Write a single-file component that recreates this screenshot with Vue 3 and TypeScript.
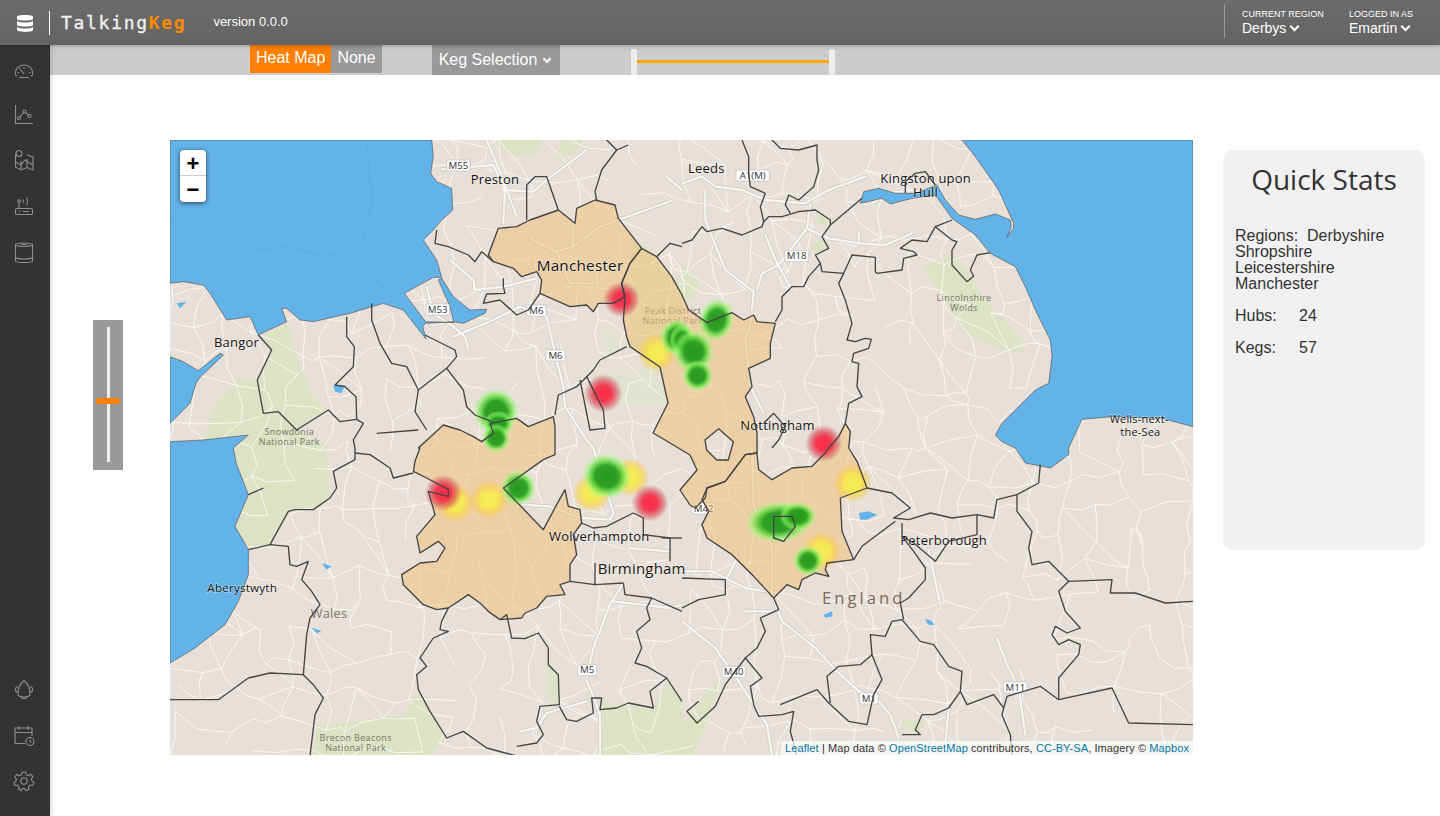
<script setup lang="ts">
type Blob = { x: number; y: number; rx: number; ry: number; c: 'g' | 'y' | 'r'; rot?: number }

// map is drawn on a 3x grid, four quadrants of 1536x924
const shift = (dx: number, dy: number, s: string) =>
  s
    .split(' ')
    .map((p) => {
      const [x, y] = p.split(',').map(Number)
      return `${x + dx},${y + dy}`
    })
    .join(' ')
const q1 = (s: string) => s
const q2 = (s: string) => shift(1536, 0, s)
const q3 = (s: string) => shift(0, 924, s)
const q4 = (s: string) => shift(1536, 924, s)
const toPath = (s: string) => 'M' + s.split(' ').join(' L')
const many = (fn: (s: string) => string, list: string[]) => list.map((s) => toPath(fn(s)))

const seaPaths = [
  // irish sea + north wales coast
  toPath(q1('0,0 785,0 790,50 782,100 800,125 845,145 848,210 815,240 790,270 760,300 800,360 815,412 790,412 703,460 770,550 850,545 880,550 945,520 950,508 900,510 850,470 815,415 805,420 840,500 852,548 770,545 758,560 768,597 700,510 640,490 540,520 430,545 390,540 350,505 335,505 350,545 265,585 240,530 170,540 120,460 100,435 40,425 0,430')) + ' Z',
  toPath(q1('0,650 40,665 85,692 150,640 160,645 90,712 78,730 60,790 0,850')) + ' Z',
  toPath(q1('0,905 100,900 235,885 190,924') + ' ' + q3('200,50 235,140 195,235 235,305 235,380 205,460 165,530 75,600 0,645')) + ' Z',
  // north sea, humber and the wash
  toPath(q2('840,0 880,50 950,150 995,250 995,265 975,290 988,262 985,240 940,222 880,238 830,225 790,180 765,135 700,160 640,160 590,145 545,155 535,190 600,175 625,192 690,175 760,165 810,235 880,285 925,340 1000,380 1030,440 1060,510 1105,600 1110,650 1100,730 1060,750 960,850 940,885 960,905 1000,924') + ' ' + q4('1030,45 1105,60 1160,20 1160,0 1200,-86 1290,-94 1440,-89 1533,-64') + ' 3069,0') + ' Z',
]

// faint offshore limits in the irish sea
const seaLines = many(q1, [
  '0,235 100,235 200,285 265,330 350,320 470,350 575,310 610,175 600,130 590,0',
  '525,340 620,420 700,510',
])

const lakes = [
  ...many(q4, ['530,195 560,190 585,200 555,215 535,215', '730,512 750,520 758,532 738,530', '425,500 450,490 452,505 430,510']),
  ...many(q1, ['20,490 50,485 30,505', '490,735 525,735 515,760 495,755']),
  ...many(q3, ['455,345 485,355 470,365', '425,540 455,548 440,556']),
]

const parks = [
  q2('725,380 810,340 870,410 900,470 1020,600 1025,640 960,630 870,590 820,540 780,470'),
  q1('270,590 355,550 380,650 430,770 470,810 380,870 325,815 280,820 262,720 305,630'),
  q1('130,800 200,720 262,720 280,820 325,815 380,870 480,924 190,924 100,900'),
  q3('190,0 470,0 480,150 430,185 355,190 300,290 235,300 200,235 235,140'),
  q3('440,830 560,820 700,800 740,730 790,800 830,870 780,924 430,924'),
  q1('975,0 1110,0 1105,40 1040,50 990,30'),
  q1('1150,60 1180,0 1240,0 1215,40'),
  q1('1380,290 1445,330 1536,440 1536,620 1470,680 1380,620'),
  q2('0,370 50,420 40,480 0,470'),
  q2('400,220 440,240 430,260 410,250'),
  q2('385,310 430,300 425,335 395,340'),
  q3('1290,760 1450,780 1490,700 1536,750 1536,924 1290,924'),
  q3('1130,620 1165,680 1165,770 1130,750'),
  q4('0,830 80,720 120,690 80,810 30,924 0,924'),
  q4('650,820 740,820 700,860'),
]

const paleParks = [q1('1300,560 1370,610 1290,660 1240,700 1470,680 1495,790 1340,790 1250,700 1310,620')]

const motorways = [
  ...many(q1, [
    '815,88 970,75 1005,150 1000,250',
    '1000,150 1090,155 1130,120 1250,30',
    '950,0 1000,120 1040,230',
    '1080,295 1160,335 1210,320 1290,260 1345,240 1510,180',
    '1160,335 1200,430 1285,430 1280,400',
    '1210,320 1210,240',
    '840,360 910,420 915,450 1000,440 1100,415',
    '770,440 790,520 850,560 885,590 895,625',
    '850,590 970,540 1050,500 1130,530 1155,640 1180,740 1185,800 1250,900 1270,924',
    '1490,110 1536,150',
  ]),
  ...many(q2, [
    '0,130 60,110 100,140 180,150 250,180 370,190 440,150 550,110',
    '70,150 70,240 130,390 215,455 210,510',
    '250,285 285,370 330,450',
    '225,450 240,400 290,375 375,265 385,195',
    '375,265 440,295 530,310 610,315 690,280',
    '530,275 530,305',
    '190,600 210,530',
    '190,600 205,740 245,820',
  ]),
  ...many(q3, [
    '1055,170 1140,175 1230,210 1320,215 1330,195 1270,0',
    '1250,700 1270,745 1290,800 1290,924',
    '1360,405 1320,470 1270,600 1250,690',
    '1330,460 1500,480 1536,470',
    '1050,850 1100,840 1130,795 1250,760',
    '1375,300 1500,310',
  ]),
  ...many(q4, [
    '210,0 215,170 270,300 270,440 300,520 400,600 465,670 530,730 590,760 625,800 650,870',
    '0,370 90,370 190,420 250,430',
    '165,330 130,400',
    '740,305 775,470',
    '945,570 975,650 1010,720 1030,860',
    '190,490 270,490',
    '0,520 100,600 170,700 215,770 255,830 270,924',
    '800,780 790,890',
  ]),
]

// thin country roads: a jittered grid of villages joined up with a seeded random
let seed = 7
const rnd = () => {
  seed = (seed * 16807) % 2147483647
  return seed / 2147483647
}
const minorRoads = (() => {
  const step = 92
  const cols = 35
  const rows = 21
  const pts: [number, number][][] = []
  for (let r = 0; r < rows; r++) {
    pts.push([])
    for (let c = 0; c < cols; c++) {
      pts[r].push([c * step + (rnd() - 0.5) * 70, r * step + (rnd() - 0.5) * 70])
    }
  }
  let d = ''
  const edge = (a: [number, number], b: [number, number]) => {
    const mx = (a[0] + b[0]) / 2 + (rnd() - 0.5) * 34
    const my = (a[1] + b[1]) / 2 + (rnd() - 0.5) * 34
    d += `M${a[0].toFixed(0)},${a[1].toFixed(0)} L${mx.toFixed(0)},${my.toFixed(0)} L${b[0].toFixed(0)},${b[1].toFixed(0)} `
  }
  for (let r = 0; r < rows; r++) {
    for (let c = 0; c < cols; c++) {
      if (c < cols - 1 && rnd() > 0.35) edge(pts[r][c], pts[r][c + 1])
      if (r < rows - 1 && rnd() > 0.35) edge(pts[r][c], pts[r + 1][c])
      if (c < cols - 1 && r < rows - 1 && rnd() > 0.82) edge(pts[r][c], pts[r + 1][c + 1])
    }
  }
  return d
})()

const regions = [
  // manchester
  toPath(q1('955,345 985,265 1040,260 1080,240 1165,210 1215,250 1220,205 1275,180 1335,195 1345,235 1415,325 1380,370 1355,430 1365,470 1330,490 1285,490 1270,515 1250,495 1200,500 1110,460 1115,420 1100,395 1055,410 1030,385 970,365')) + ' Z',
  // derbyshire
  toPath('1415,325 1460,350 1505,410 1536,465 1556,510 1611,548 1686,518 1721,540 1751,525 1761,545 1816,550 1801,610 1801,655 1736,685 1746,740 1726,770 1751,830 1761,880 1761,939 1726,944 1666,1024 1611,1044 1606,1074 1576,1104 1560,1095 1530,1050 1581,990 1560,945 1485,900 1449,879 1494,789 1470,681 1380,620 1370,590 1360,540 1365,480 1355,430 1380,370') +
    ' Z ' + toPath('1605,900 1646,866 1690,905 1675,960 1640,960 1610,930') + ' Z',
  // leicestershire
  toPath('2026,850 2041,875 2036,924 2061,964 2091,1044 2011,1074 2016,1174 2051,1259 1971,1269 1966,1289 1976,1309 1936,1299 1896,1319 1886,1349 1851,1334 1811,1374 1751,1309 1686,1244 1611,1194 1596,1154 1616,1114 1596,1079 1611,1044 1666,1024 1726,944 1761,939 1766,989 1806,1019 1866,984 1926,979 1966,939 1976,924 2006,890') +
    ' Z ' + toPath('1811,1129 1866,1129 1876,1159 1841,1204 1811,1194') + ' Z',
  // shropshire
  toPath(q1('745,924 820,855 870,870 910,890 935,905 970,880 960,850 1040,835 1075,860 1150,830 1155,860') + ' ' +
    q3('1155,20 1120,35 1000,120 1120,245 1160,170 1185,125 1195,175 1230,185 1235,225 1210,260 1220,320 1200,350 1200,400 1170,410 1185,440 1130,445 1100,480 1065,495 1055,510 990,515 955,490 930,465 895,440 835,480 800,485 760,470 700,410 695,380 750,345 800,340 825,300 805,280 750,315 740,265 795,200 775,130 835,145 835,125 770,90 730,70 735,40 750,0')) + ' Z',
]

const borders = [
  ...many(q1, [
    '1375,15 1340,30 1295,90 1275,155 1280,180',
    '1340,30 1310,0',
    '1070,240 1070,135 1095,110 1130,110 1165,210',
    '800,270 795,310 835,320 895,345 915,365 935,335 970,365',
    '1000,415 1000,440 1005,460 950,462 940,490 990,480 1040,525 1075,510 1110,460',
    '605,490 605,540 630,610 665,670 710,680 745,750 830,685 860,650 855,630 765,585',
    '530,530 530,590 553,620 550,680 495,735 525,740 558,770 560,838 510,845 475,810 380,870 325,815 280,820 262,720 305,630 265,585',
    '745,750 735,815 770,870',
    '830,685 880,750 890,800 915,825 965,845',
    '1370,620 1290,660 1270,690 1250,710 1220,740 1165,765 1155,825',
    '1250,710 1300,810 1305,865 1260,870 1230,720',
    '1460,350 1500,310 1536,320',
    '560,838 580,850 550,900 555,924',
    '620,880 745,870',
  ]),
  ...many(q2, [
    '180,0 200,50 200,100 205,140 250,160 235,200 245,245 240,260 180,285 120,265 75,275 60,260 30,300 0,310',
    '270,0 295,25 350,30 405,15 405,60 410,90 395,140 350,180 320,165 310,195 325,220',
    '245,245 260,230 300,230 350,215 400,210 445,240 445,255 540,175',
    '445,255 420,290 440,325 400,345 415,370 380,410 365,440 330,440 300,470 300,510 280,545',
    '415,370 420,395 485,400 510,345 580,352 580,395 585,400 660,390 665,355 705,345 695,335 655,325 690,300 735,305 760,260 810,300 825,305 810,330 810,375 855,425 875,408 865,390 885,345 925,338',
    '760,260 810,240',
    '485,400 470,430 490,480 510,550 495,600 520,605 550,595 568,598 560,625 515,640 510,665 530,670 525,740 540,770 500,790 490,850',
    '670,160 670,125 700,100 730,95 760,135',
    '245,850 275,820 310,860 290,900 270,924',
  ]),
  ...many(q3, [
    '235,140 280,120',
    '300,290 355,190 375,185 430,185 480,150 500,120 490,70 555,35 555,0',
    '555,15 600,20 660,60 670,90 730,75',
    '235,305 300,290 355,295 360,350 380,355 415,340 395,395 425,430 450,470 420,510 410,560 400,680 300,675 235,690 145,755 0,755',
    '400,680 430,710 460,750 435,800 420,924',
    '835,480 815,520 810,545 835,550 790,570 750,630 770,655 740,680 745,725 780,790 830,870 880,850 950,900 1040,924',
    '990,515 1010,500 1025,570 1065,572 1105,555 1135,600 1135,650 1165,680 1168,770 1110,775 1100,820 1120,860 1100,885 1040,895',
    '1168,775 1190,815 1220,820 1270,795 1265,750 1295,750 1290,785 1340,780 1375,765 1450,780 1440,730 1490,690 1536,760',
    '1490,690 1430,655 1395,645 1415,600 1400,550 1440,515 1430,480 1445,450 1365,440 1360,405',
    '1200,400 1275,410 1275,345',
    '1275,410 1360,405',
    '1235,225 1270,240 1310,235 1390,195 1420,210 1420,260 1500,270 1500,340',
    '1475,270 1536,270',
    '1445,450 1536,490',
  ]),
  ...many(q4, [
    '0,390 130,395 130,440 50,455 0,480',
    '275,450 290,485 235,510 250,550 225,600 190,630 240,690 205,715 215,770 230,805 300,800 335,790 325,850 345,924',
    '190,630 130,710 100,775 45,825 15,790 50,760',
    '295,770 405,725 440,765 500,820 555,830 575,740 600,695 570,620 535,650 470,655 435,685 445,765',
    '570,620 565,560 610,565 630,520 660,515 715,580 755,590 800,655 840,670 835,730 800,780 755,800 720,800 700,845 715,860 660,860',
    '835,730 855,770 935,740 965,780 960,800 985,860 990,924',
    '965,780 975,745 1075,715 1130,755 1290,720 1340,825 1533,830',
    '1130,755 1130,690 1190,620 1195,590 1160,575 1130,590 1110,560 1120,535 1155,555 1195,540 1150,490 1130,430 1160,400 1290,395 1285,435 1360,435 1450,465 1533,460',
    '1160,400 1100,340 1050,350 1040,300 1050,250 1005,190 1005,140 1070,105 1075,50',
    '1005,140 945,155 935,210 885,200 810,210 745,195 680,215 635,210 685,180 630,135 555,120',
    '640,220 540,295 515,335',
    '660,225 660,265 695,310 730,360 730,395 680,450 655,465 665,515',
    '885,200 885,260 800,280 760,340 695,285 660,265',
  ]),
]

const heat: Blob[] = [
  { x: 1355, y: 478, rx: 56, ry: 54, c: 'r' },
  { x: 1300, y: 760, rx: 58, ry: 58, c: 'r' },
  { x: 1460, y: 638, rx: 58, ry: 58, c: 'y' },
  { x: 1520, y: 592, rx: 52, ry: 56, c: 'g' },
  { x: 978, y: 815, rx: 70, ry: 70, c: 'g' },
  { x: 985, y: 852, rx: 46, ry: 40, c: 'g' },
  { x: 978, y: 895, rx: 44, ry: 44, c: 'g' },
  { x: 855, y: 1089, rx: 58, ry: 58, c: 'y' },
  { x: 820, y: 1059, rx: 56, ry: 56, c: 'r' },
  { x: 958, y: 1079, rx: 58, ry: 58, c: 'y' },
  { x: 1045, y: 1044, rx: 54, ry: 54, c: 'g' },
  { x: 1380, y: 1012, rx: 58, ry: 58, c: 'y' },
  { x: 1265, y: 1059, rx: 58, ry: 58, c: 'y' },
  { x: 1310, y: 1009, rx: 76, ry: 70, c: 'g', rot: 15 },
  { x: 1440, y: 1089, rx: 56, ry: 56, c: 'r' },
  { x: 1639, y: 540, rx: 54, ry: 66, c: 'g', rot: 15 },
  { x: 1536, y: 600, rx: 38, ry: 46, c: 'g' },
  { x: 1571, y: 635, rx: 62, ry: 66, c: 'g' },
  { x: 1583, y: 707, rx: 48, ry: 48, c: 'g' },
  { x: 1961, y: 910, rx: 56, ry: 56, c: 'r' },
  { x: 2048, y: 1029, rx: 58, ry: 58, c: 'y' },
  { x: 1825, y: 1146, rx: 100, ry: 64, c: 'g', rot: -4 },
  { x: 1884, y: 1129, rx: 56, ry: 44, c: 'g' },
  { x: 1954, y: 1234, rx: 58, ry: 58, c: 'y' },
  { x: 1914, y: 1262, rx: 46, ry: 46, c: 'g' },
]

const labels = [
  { t: 'Preston', x: 902, y: 132, s: 39 },
  { t: 'Manchester', x: 1100, y: 393, s: 46 },
  { t: 'Bangor', x: 132, y: 620, s: 39 },
  { t: 'Leeds', x: 1554, y: 98, s: 39 },
  { t: 'Kingston upon', x: 2131, y: 128, s: 39 },
  { t: 'Hull', x: 2229, y: 170, s: 39 },
  { t: 'Nottingham', x: 1711, y: 870, s: 39 },
  { t: 'Wells-next-', x: 2819, y: 848, s: 33 },
  { t: 'the-Sea', x: 2851, y: 887, s: 33 },
  { t: 'Aberystwyth', x: 112, y: 1356, s: 35 },
  { t: 'Wolverhampton', x: 1137, y: 1204, s: 39 },
  { t: 'Birmingham', x: 1283, y: 1302, s: 45 },
  { t: 'Peterborough', x: 2191, y: 1214, s: 39 },
]

const parkLabels = [
  { t: 'Peak District', x: 1509, y: 522 },
  { t: 'National Park', x: 1509, y: 551 },
  { t: 'Snowdonia', x: 358, y: 886 },
  { t: 'National Park', x: 358, y: 915 },
  { t: 'Lincolnshire', x: 2382, y: 483 },
  { t: 'Wolds', x: 2382, y: 512 },
  { t: 'Brecon Beacons', x: 557, y: 1803 },
  { t: 'National Park', x: 557, y: 1832 },
]

const shields = [
  { t: 'M55', x: 830, y: 60, w: 70 },
  { t: 'M53', x: 768, y: 492, w: 70 },
  { t: 'M6', x: 1070, y: 495, w: 58 },
  { t: 'M6', x: 1128, y: 630, w: 57 },
  { t: 'A1(M)', x: 1698, y: 90, w: 100 },
  { t: 'M18', x: 1844, y: 332, w: 72 },
  { t: 'M5', x: 1223, y: 1574, w: 57 },
  { t: 'M42', x: 1566, y: 1089, w: 70 },
  { t: 'M40', x: 1656, y: 1579, w: 70 },
  { t: 'M1', x: 2069, y: 1659, w: 55 },
  { t: 'M11', x: 2501, y: 1626, w: 70 },
]
</script>

<template>
  <div class="app">
    <header class="topbar">
      <svg class="logo-icon" width="18" height="20" viewBox="0 0 18 20">
        <path d="M1 3.5C1 1.5 17 1.5 17 3.5V6C17 8 1 8 1 6Z" fill="#fff" />
        <path d="M1 8C4 10 14 10 17 8V12C17 14 1 14 1 12Z" fill="#fff" />
        <path d="M1 14C4 16 14 16 17 14V17C17 19.5 1 19.5 1 17Z" fill="#fff" />
      </svg>
      <span class="logo-divider"></span>
      <span class="logo-text">Talking<b>Keg</b></span>
      <span class="version">version 0.0.0</span>
      <div class="top-right">
        <div class="top-menu first">
          <small>CURRENT REGION</small>
          <span>Derbys <i class="chev"></i></span>
        </div>
        <div class="top-menu">
          <small>LOGGED IN AS</small>
          <span>Emartin <i class="chev"></i></span>
        </div>
      </div>
    </header>

    <div class="body">
      <nav class="sidebar">
        <div class="nav-group">
          <a class="nav-item">
            <svg width="24" height="24" viewBox="0 0 24 24">
              <path d="M4.500 20.500C3.500 19 3 17 3.500 15.500C4.500 11.500 8 9 12 9C16 9 19.500 11.500 20.500 15.500C21 17 20.500 19 19.500 20.500" />
              <path d="M7 21.500H17M12 18L8.500 13.500M5.500 16.500H7M18.500 16.500H17M12 11V12.500M7.500 12L8.500 13" />
            </svg>
          </a>
          <a class="nav-item">
            <svg width="24" height="24" viewBox="0 0 24 24">
              <path d="M3.500 3V21.500H21" />
              <circle cx="7" cy="16" r="1.500" /><circle cx="12.500" cy="9.500" r="1.500" /><circle cx="17.500" cy="14" r="1.500" />
              <path d="M8 15L11.500 10.500M13.700 10.500L16.300 13" />
            </svg>
          </a>
          <a class="nav-item">
            <svg width="24" height="24" viewBox="0 0 24 24">
              <path d="M3.500 6V19L9 22L15 19.500L21 22V9L15 7" />
              <path d="M9 13V22M15 11V19.500M3.500 14L9 17L13 12L21 17" />
              <circle cx="7" cy="5.500" r="3" />
            </svg>
          </a>
          <a class="nav-item">
            <svg width="24" height="24" viewBox="0 0 24 24">
              <rect x="3.500" y="14.500" width="17" height="6" rx="1.200" />
              <circle cx="7" cy="7" r="1.300" />
              <path d="M7 8.500V14.500M11 5.500C11.700 6.500 11.700 8 11 9M14.500 3.500C15.800 5.500 15.800 9 14.500 11M7 17.500H8.500M11 17.500H17" />
            </svg>
          </a>
          <a class="nav-item">
            <svg width="24" height="24" viewBox="0 0 24 24">
              <path d="M3.500 4.500C3.500 2.500 20.500 2.500 20.500 4.500V21C20.500 23 3.500 23 3.500 21Z" />
              <path d="M3.500 5C7 7 17 7 20.500 5M3.500 17.500C7 19.500 17 19.500 20.500 17.500M9 4.500H15" />
            </svg>
          </a>
        </div>
        <div class="nav-group bottom">
          <a class="nav-item">
            <svg width="24" height="24" viewBox="0 0 24 24">
              <path d="M6 18.500C6 13 7 7 12 3.500C17 7 18 13 18 18.500C15 20.500 9 20.500 6 18.500Z" />
              <path d="M6 9.500C2.500 10.500 2.500 14.500 6 15.500M18 9.500C21.500 10.500 21.500 14.500 18 15.500M10 20V21.500H14V20" />
            </svg>
          </a>
          <a class="nav-item">
            <svg width="24" height="24" viewBox="0 0 24 24">
              <path d="M13 20.500H3V5H20V13" />
              <path d="M3 9.500H20M7 3V7M16 3V7" />
              <circle cx="18" cy="18.500" r="4" />
              <path d="M18 16.500V18.500L19.300 19.500" />
            </svg>
          </a>
          <a class="nav-item">
            <svg width="24" height="24" viewBox="0 0 24 24">
              <circle cx="12" cy="12" r="3.200" />
              <path d="M10.300 3H13.700L14.300 5.800L16.400 6.700L18.800 5.200L21 7.700L19.300 9.800L20 12L22 13.700L20.500 16.500L18 16L16.500 18L16.800 20.500L13.800 21.500L12.500 19.500H10.500L9.200 21.500L6.500 20.300L7 17.800L5.200 16L2.800 16.500L2 13.500L4 12L4.300 9.800L2.800 7.700L5 5.300L7.300 6.700L9.500 5.800Z" />
            </svg>
          </a>
        </div>
      </nav>

      <main class="main">
        <div class="toolbar">
          <button class="tab active">Heat Map</button>
          <button class="tab">None</button>
          <button class="keg-select">Keg Selection <i class="chev small"></i></button>
          <div class="range">
            <span class="handle"></span>
            <span class="range-line"></span>
            <span class="handle"></span>
          </div>
        </div>

        <div class="content">
          <div class="zoom-slider">
            <span class="zoom-track"></span>
            <span class="zoom-thumb"></span>
          </div>

          <div class="map">
            <svg class="map-svg" width="1023" height="615" viewBox="0 0 3069 1845">
              <defs>
                <radialGradient id="heat-g">
                  <stop offset="0" stop-color="#249a1c" />
                  <stop offset="0.46" stop-color="#2a9c20" stop-opacity="0.95" />
                  <stop offset="0.6" stop-color="#48c830" stop-opacity="0.85" />
                  <stop offset="0.8" stop-color="#90f268" stop-opacity="0.6" />
                  <stop offset="1" stop-color="#b8f8a0" stop-opacity="0" />
                </radialGradient>
                <radialGradient id="heat-y">
                  <stop offset="0" stop-color="#f2ee58" />
                  <stop offset="0.42" stop-color="#f6ea50" stop-opacity="0.95" />
                  <stop offset="0.7" stop-color="#f8d450" stop-opacity="0.65" />
                  <stop offset="1" stop-color="#f8c050" stop-opacity="0" />
                </radialGradient>
                <radialGradient id="heat-r">
                  <stop offset="0" stop-color="#fb2a48" />
                  <stop offset="0.42" stop-color="#f5304a" stop-opacity="0.95" />
                  <stop offset="0.7" stop-color="#d84a58" stop-opacity="0.6" />
                  <stop offset="1" stop-color="#c85a60" stop-opacity="0" />
                </radialGradient>
              </defs>

              <rect width="3069" height="1845" fill="#e8e0d8" />
              <polygon v-for="(p, i) in parks" :key="'park' + i" :points="p" fill="#dce2c4" />
              <polygon v-for="(p, i) in paleParks" :key="'pale' + i" :points="p" fill="#e2e2d0" />
              <path :d="minorRoads" class="minor" />
              <path v-for="(d, i) in motorways" :key="'mc' + i" :d="d" class="motorway-case" />
              <path v-for="(d, i) in motorways" :key="'m' + i" :d="d" class="motorway" />
              <path v-for="(d, i) in lakes" :key="'lake' + i" :d="d + ' Z'" fill="#63b3e8" />
              <path v-for="(d, i) in seaPaths" :key="'sea' + i" :d="d" class="sea" />
              <path v-for="(d, i) in seaLines" :key="'sl' + i" :d="d" class="sea-line" />

              <g v-for="s in shields" :key="s.t + s.x">
                <rect :x="s.x" :y="s.y" :width="s.w" height="33" rx="5" fill="#fff" stroke="#bbb" stroke-width="2" />
                <text :x="s.x + s.w / 2" :y="s.y + 26" text-anchor="middle" class="shield">{{ s.t }}</text>
              </g>
              <text v-for="l in parkLabels" :key="l.t + l.y" :x="l.x" :y="l.y" text-anchor="middle" class="park-label">{{ l.t }}</text>
              <text x="422" y="1434" class="area">Wales</text>
              <text x="1956" y="1391" class="england">England</text>

              <path v-for="(d, i) in regions" :key="'reg' + i" :d="d" class="region" />
              <text v-for="l in labels" :key="l.t" :x="l.x" :y="l.y" :font-size="l.s" class="city">{{ l.t }}</text>
              <ellipse
                v-for="(b, i) in heat"
                :key="'heat' + i"
                :cx="b.x"
                :cy="b.y"
                :rx="b.rx"
                :ry="b.ry"
                :fill="`url(#heat-${b.c})`"
                :transform="b.rot ? `rotate(${b.rot} ${b.x} ${b.y})` : undefined"
              />
              <path v-for="(d, i) in regions" :key="'regl' + i" :d="d" class="region-line" />
              <path v-for="(d, i) in borders" :key="'b' + i" :d="d" class="border" />
            </svg>

            <div class="zoom-control">
              <a>+</a>
              <a>−</a>
            </div>
            <div class="attribution">
              <a>Leaflet</a> | Map data © <a>OpenStreetMap</a> contributors, <a>CC-BY-SA</a>, Imagery © <a>Mapbox</a>
            </div>
          </div>

          <aside class="stats">
            <h2>Quick Stats</h2>
            <p>Regions:&nbsp;&nbsp;Derbyshire<br />Shropshire<br />Leicestershire<br />Manchester</p>
            <p><span class="stat-label">Hubs:</span>24</p>
            <p><span class="stat-label">Kegs:</span>57</p>
          </aside>
        </div>
      </main>
    </div>
  </div>
</template>

<style>
html,
body {
  margin: 0;
  background: #fff;
}
</style>

<style scoped>
.app {
  display: flex;
  flex-direction: column;
  height: 816px;
  overflow: hidden;
  font-family: "Liberation Sans", Arial, sans-serif;
}

.topbar {
  position: relative;
  z-index: 3;
  display: flex;
  align-items: center;
  flex: 0 0 45px;
  background: linear-gradient(#6b6b6b, #646464);
  box-shadow: 0 1px 4px rgba(0, 0, 0, 0.25);
  color: #fff;
}

.logo-icon {
  margin-left: 16px;
}

.logo-divider {
  width: 1px;
  height: 24px;
  margin-left: 15px;
  background: #fff;
}

.logo-text {
  margin-left: 11px;
  font-family: "DejaVu Sans Mono", monospace;
  font-size: 18px;
  letter-spacing: 1.7px;
  color: #eee;
  -webkit-text-stroke: 0.4px #eee;
}

.logo-text b {
  color: #ff8a00;
  -webkit-text-stroke: 0;
}

.version {
  margin-left: 27px;
  margin-bottom: 3px;
  font-size: 13px;
}

.top-right {
  display: flex;
  margin-left: auto;
  height: 34px;
  margin-bottom: 4px;
}

.top-menu {
  display: flex;
  flex-direction: column;
  width: 107px;
  padding-top: 4px;
  box-sizing: border-box;
}

.top-menu.first {
  border-left: 1px solid #999;
  padding-left: 17px;
  width: 107px;
  margin-right: 18px;
}

.top-menu:last-child {
  width: 91px;
}

.top-menu small {
  font-size: 9px;
  line-height: 12px;
}

.top-menu span {
  font-size: 14px;
  line-height: 17px;
}

.chev {
  display: inline-block;
  width: 5px;
  height: 5px;
  margin: 0 0 3px 1px;
  border-right: 2px solid #fff;
  border-bottom: 2px solid #fff;
  transform: rotate(45deg);
}

.chev.small {
  width: 4px;
  height: 4px;
  margin-left: 2px;
}

.body {
  display: flex;
  flex: 1;
  min-height: 0;
}

.sidebar {
  position: relative;
  z-index: 2;
  display: flex;
  flex-direction: column;
  justify-content: space-between;
  flex: 0 0 50px;
  padding-bottom: 12px;
  box-sizing: border-box;
  background: #333;
  box-shadow: 1px 0 5px rgba(0, 0, 0, 0.2);
}

.nav-item {
  display: flex;
  align-items: center;
  justify-content: center;
  height: 46px;
  padding-right: 2px;
}

.nav-item svg {
  fill: none;
  stroke: #8e8e8e;
  stroke-width: 1.100;
}

.main {
  flex: 1;
  min-width: 0;
}

.toolbar {
  display: flex;
  align-items: flex-start;
  height: 30px;
  background: #ccc;
}

.tab {
  height: 28px;
  padding: 0 6px 2px;
  border: 0;
  background: #999;
  color: #fff;
  font: 16px "Liberation Sans", Arial, sans-serif;
}

.tab.active {
  margin-left: 200px;
  background: #ff8000;
}

.keg-select {
  width: 128px;
  height: 30px;
  margin-left: 50px;
  padding: 0 0 0 7px;
  border: 0;
  text-align: left;
  background: #999;
  color: #fff;
  font: 16px "Liberation Sans", Arial, sans-serif;
}

.range {
  display: flex;
  align-items: center;
  width: 204px;
  height: 26px;
  margin: 4px 0 0 71px;
}

.handle {
  flex: 0 0 6px;
  height: 26px;
  border-radius: 2px;
  background: #eee;
}

.range-line {
  flex: 1;
  height: 3px;
  margin-bottom: 2px;
  background: #ffa500;
}

.content {
  display: flex;
  align-items: flex-start;
  padding-top: 65px;
}

.zoom-slider {
  position: relative;
  flex: 0 0 30px;
  height: 150px;
  margin: 180px 0 0 43px;
  background: #999;
}

.zoom-track {
  position: absolute;
  left: 14px;
  top: 7px;
  width: 3px;
  height: 135px;
  background: #eee;
}

.zoom-thumb {
  position: absolute;
  left: 3px;
  top: 78px;
  width: 24px;
  height: 6px;
  border-radius: 3px;
  background: #ff8000;
}

.map {
  position: relative;
  flex: 0 0 1023px;
  height: 615px;
  margin-left: 47px;
  overflow: hidden;
}

.map-svg {
  display: block;
}

.sea {
  fill: #63b3e8;
  stroke: #555;
  stroke-width: 2;
}

.sea-line {
  fill: none;
  stroke: #5aa8dc;
  stroke-width: 2;
}

.minor {
  fill: none;
  stroke: #fbf9f6;
  stroke-width: 3;
  stroke-linejoin: round;
  opacity: 0.9;
}

.motorway-case {
  fill: none;
  stroke: #cfc9c3;
  stroke-width: 11;
  stroke-linejoin: round;
  stroke-linecap: round;
}

.motorway {
  fill: none;
  stroke: #f8f6f3;
  stroke-width: 7;
  stroke-linejoin: round;
  stroke-linecap: round;
}

.region {
  fill: #eec17a;
  fill-opacity: 0.55;
  fill-rule: evenodd;
}

.region-line,
.border {
  fill: none;
  stroke: #444;
  stroke-width: 4;
  stroke-linejoin: round;
}

.city,
.area,
.park-label,
.england,
.shield {
  font-family: "Open Sans", "Noto Sans", sans-serif;
}

.city {
  fill: #111;
  font-weight: 500;
  stroke: rgba(255, 255, 255, 0.45);
  stroke-width: 4;
  paint-order: stroke;
  letter-spacing: 0.6px;
}

.area {
  font-size: 38px;
  fill: #7c7670;
  letter-spacing: 1px;
}

.park-label {
  font-size: 27px;
  fill: #77756a;
  letter-spacing: 1px;
}

.england {
  font-size: 50px;
  fill: #7a6a5a;
  letter-spacing: 9px;
}

.shield {
  font-size: 29px;
  fill: #333;
}

.zoom-control {
  position: absolute;
  left: 10px;
  top: 10px;
  width: 26px;
  border-radius: 4px;
  background: #fff;
  box-shadow: 0 1px 5px rgba(0, 0, 0, 0.65);
}

.zoom-control a {
  display: block;
  height: 26px;
  text-align: center;
  font: bold 22px/27px "Liberation Sans", Arial, sans-serif;
  color: #000;
}

.zoom-control a:first-child {
  height: 25px;
  border-bottom: 1px solid #ccc;
}

.attribution {
  position: absolute;
  right: 0;
  bottom: 0;
  padding: 0 4px;
  background: rgba(255, 255, 255, 0.7);
  color: #333;
  font-size: 11px;
  letter-spacing: 0.09px;
  line-height: 14.500px;
  white-space: nowrap;
}

.attribution a {
  color: #0078a8;
}

.stats {
  flex: 0 0 202px;
  height: 400px;
  margin: 10px 0 0 30px;
  padding: 0 12px;
  box-sizing: border-box;
  border-radius: 10px;
  background: #f1f1f1;
  color: #333;
  font-size: 16px;
  line-height: 16px;
}

.stats h2 {
  margin: 8px 0 29px;
  padding-top: 1px;
  text-align: center;
  font: 400 28px/40px "Open Sans", "Noto Sans", sans-serif;
  color: #333;
}

.stats p {
  margin: 0 0 16px;
}

.stat-label {
  display: inline-block;
  width: 64px;
}
</style>
